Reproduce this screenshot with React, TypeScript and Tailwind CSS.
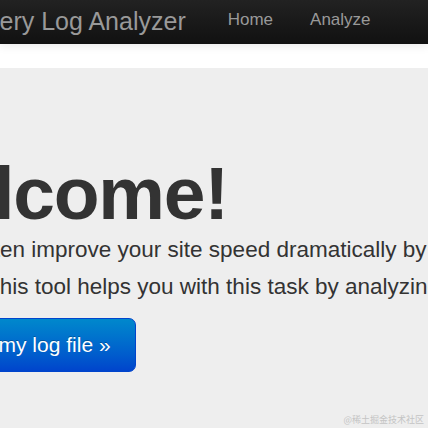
export default function App() {
  return (
    <div className="relative flex min-h-screen flex-col overflow-hidden bg-white font-['Liberation_Sans',Arial,sans-serif]">
      <nav className="relative z-10 flex h-11 items-start bg-linear-to-b from-[#222222] to-[#111111] shadow-[0_1px_10px_rgba(0,0,0,0.1)]">
        <a className="ml-[-95px] whitespace-nowrap text-[25px] leading-[42px] text-[#999999]">
          Slow Query Log Analyzer
        </a>
        <ul className="flex">
          <li className="ml-[42px] text-[17px] leading-[40px] text-[#999999]">Home</li>
          <li className="ml-[37px] text-[17px] leading-[40px] text-[#999999]">Analyze</li>
        </ul>
      </nav>

      <div className="h-6" />

      <section className="flex-1 bg-[#eeeeee] pt-[88px] text-[#333333]">
        <h1 className="ml-[-115px] whitespace-nowrap text-[75px] font-bold leading-[75px] tracking-[-1.25px]">
          Welcome!
        </h1>
        <p className="text-[22.5px] leading-[37px]">
          <span className="ml-[-25px] block whitespace-nowrap">
            often improve your site speed dramatically by optimizing your queries.
          </span>
          <span className="ml-[-14px] block whitespace-nowrap">
            This tool helps you with this task by analyzing your slow query log.
          </span>
        </p>
        <a className="mt-[13px] ml-[-107px] flex h-[54px] w-fit items-center whitespace-nowrap rounded-[7px] border border-[#0044cc] bg-linear-to-b from-[#0088cc] to-[#0044cc] px-[24px] text-[21px] text-white [text-shadow:0_-1px_0_rgba(0,0,0,0.25)]">
          Analyze my log file »
        </a>
      </section>

      <span className="absolute right-[4px] bottom-[2px] font-['Noto_Sans_CJK_SC',sans-serif] text-[9px] text-[#c4c4c4]">
        @稀土掘金技术社区
      </span>
    </div>
  );
}
